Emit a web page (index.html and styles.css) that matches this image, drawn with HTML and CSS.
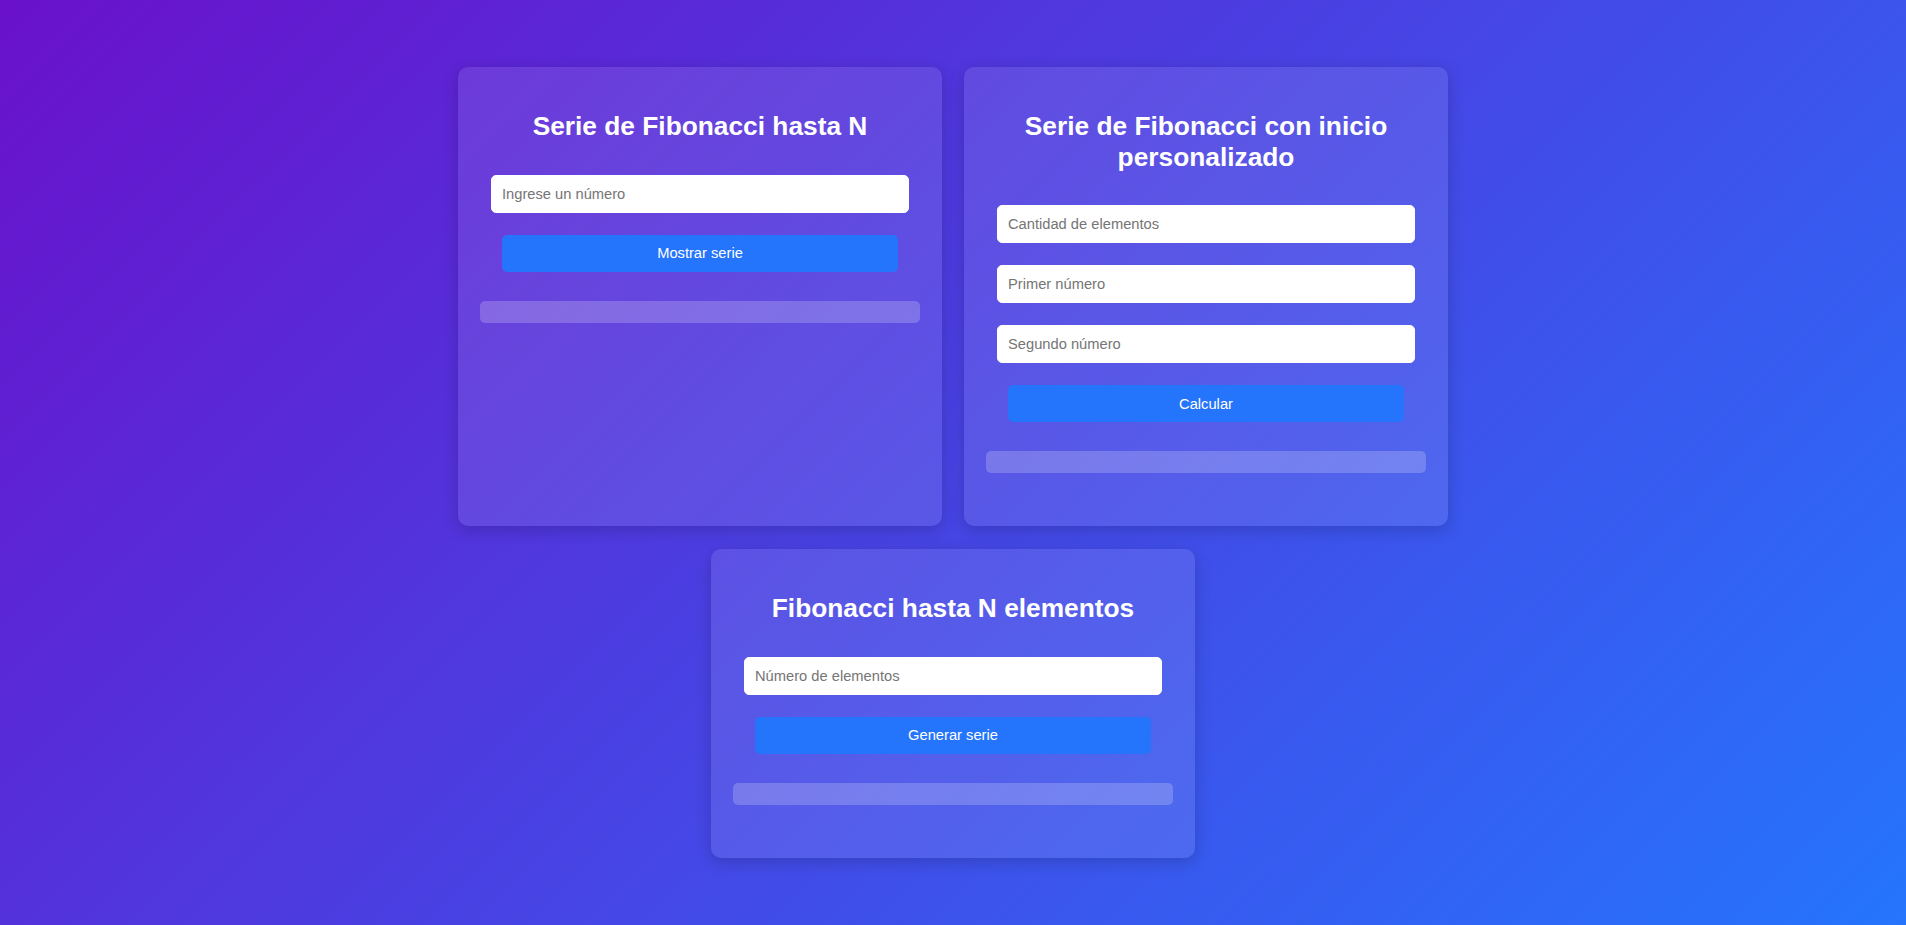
FILE: index.html
```html
<!DOCTYPE html>
<html lang="es">
<head>
<meta charset="utf-8">
<title>Fibonacci</title>
<link rel="stylesheet" href="styles.css">
</head>
<body>
<main class="page">
  <section class="card">
    <h2 class="card-title">Serie de Fibonacci hasta N</h2>
    <input class="field" type="number" placeholder="Ingrese un número">
    <button class="btn" type="button">Mostrar serie</button>
    <div class="result"></div>
  </section>
  <section class="card">
    <h2 class="card-title">Serie de Fibonacci con inicio personalizado</h2>
    <input class="field" type="number" placeholder="Cantidad de elementos">
    <input class="field" type="number" placeholder="Primer número">
    <input class="field" type="number" placeholder="Segundo número">
    <button class="btn" type="button">Calcular</button>
    <div class="result"></div>
  </section>
  <section class="card">
    <h2 class="card-title">Fibonacci hasta N elementos</h2>
    <input class="field" type="number" placeholder="Número de elementos">
    <button class="btn" type="button">Generar serie</button>
    <div class="result"></div>
  </section>
</main>
</body>
</html>
```
FILE: styles.css
```css
html, body {
  margin: 0;
  padding: 0;
}

body {
  min-height: 100vh;
  background: linear-gradient(135deg, #6a11cb 0%, #2575fc 100%);
  font-family: "Liberation Sans", Arial, sans-serif;
  color: #fff;
}

.page {
  width: 990px;
  min-height: 100vh;
  margin: 0 auto;
  display: flex;
  flex-wrap: wrap;
  justify-content: center;
  align-content: center;
  column-gap: 22px;
  row-gap: 23px;
}

.card {
  width: 484px;
  box-sizing: border-box;
  padding: 22px;
  display: flex;
  flex-direction: column;
  align-items: center;
  background: rgba(255, 255, 255, 0.1);
  border-radius: 10px;
  box-shadow: 0 4px 16px rgba(0, 0, 0, 0.18);
}

.card-title {
  margin: 22px 0 33px;
  font-size: 26.3px;
  line-height: 30.5px;
  font-weight: bold;
  text-align: center;
  color: #fff;
}

.field {
  width: 418px;
  height: 38px;
  box-sizing: border-box;
  margin: 0 0 22px;
  padding: 0 10px;
  border: 1px solid #fff;
  border-radius: 5px;
  background: #fff;
  font-family: "Liberation Sans", Arial, sans-serif;
  font-size: 14.7px;
  color: #222;
  outline: none;
  -moz-appearance: textfield;
}

.field::-webkit-outer-spin-button,
.field::-webkit-inner-spin-button {
  -webkit-appearance: none;
  margin: 0;
}

.field::placeholder {
  color: #757575;
}

.btn {
  width: 396px;
  height: 37px;
  margin: 0 0 29px;
  padding: 0;
  border: none;
  border-radius: 5px;
  background: #2575fc;
  color: #fff;
  font-family: "Liberation Sans", Arial, sans-serif;
  font-size: 14.7px;
  cursor: pointer;
}

.result {
  align-self: stretch;
  height: 22px;
  margin-bottom: 31px;
  background: rgba(255, 255, 255, 0.2);
  border-radius: 5px;
}
```
